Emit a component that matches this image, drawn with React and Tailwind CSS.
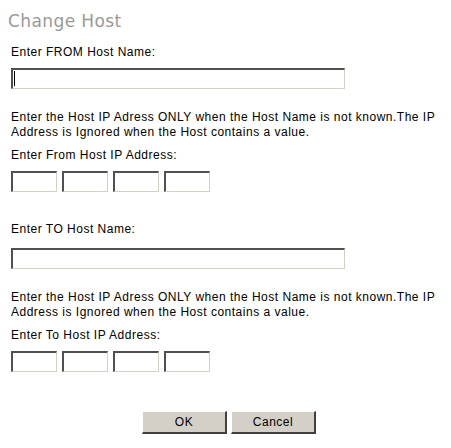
import React from "react";

const inset =
  "bg-white border-t-2 border-l-2 border-b border-r border-t-[#505050] border-l-[#505050] border-b-[#d4d0c8] border-r-[#d4d0c8] outline-none";

const TextBox = ({ caret }) => (
  <div className="relative w-[334px] h-[21px]">
    <input type="text" readOnly className={`${inset} w-full h-full`} />
    {caret && <span className="absolute left-[3px] top-[3px] w-px h-[15px] bg-black" />}
  </div>
);

const IpBoxes = () => (
  <div className="flex gap-[5px]">
    {[0, 1, 2, 3].map((i) => (
      <input key={i} type="text" readOnly className={`${inset} w-[46px] h-[21px]`} />
    ))}
  </div>
);

const Note = () => (
  <p className="leading-[15px]">
    Enter the Host IP Adress ONLY when the Host Name is not known.The IP Address is Ignored when the Host contains a value.
  </p>
);

const Btn = ({ children }) => (
  <button className="w-[85px] h-[23px] bg-[#d4d0c8] border-t border-l border-b-2 border-r-2 border-t-white border-l-white border-b-[#404040] border-r-[#404040] text-[12px] tracking-[0.5px] text-black">
    {children}
  </button>
);

export default function App() {
  return (
    <div className="w-[451px] h-[448px] bg-white text-black text-[12px] tracking-[0.5px] font-['Liberation_Sans',Arial,sans-serif] px-[11px]">
      <h1 className="pt-[10px] -ml-[3px] text-[17px] leading-[23px] tracking-[0.4px] text-[#999999] font-['DejaVu_Sans',Verdana,sans-serif]">
        Change Host
      </h1>

      {/* FROM */}
      <div className="mt-[12px] leading-[14px]">Enter FROM Host Name:</div>
      <div className="mt-[9px]">
        <TextBox caret />
      </div>

      <div className="mt-[21px]">
        <Note />
      </div>
      <div className="mt-[8px] leading-[14px]">Enter From Host IP Address:</div>
      <div className="mt-[9px]">
        <IpBoxes />
      </div>

      {/* TO */}
      <div className="mt-[30px] leading-[14px]">Enter TO Host Name:</div>
      <div className="mt-[12px]">
        <TextBox />
      </div>

      <div className="mt-[21px]">
        <Note />
      </div>
      <div className="mt-[8px] leading-[14px]">Enter To Host IP Address:</div>
      <div className="mt-[9px]">
        <IpBoxes />
      </div>

      <div className="mt-[39px] flex gap-[4px] pl-[131px]">
        <Btn>OK</Btn>
        <Btn>Cancel</Btn>
      </div>
    </div>
  );
}
